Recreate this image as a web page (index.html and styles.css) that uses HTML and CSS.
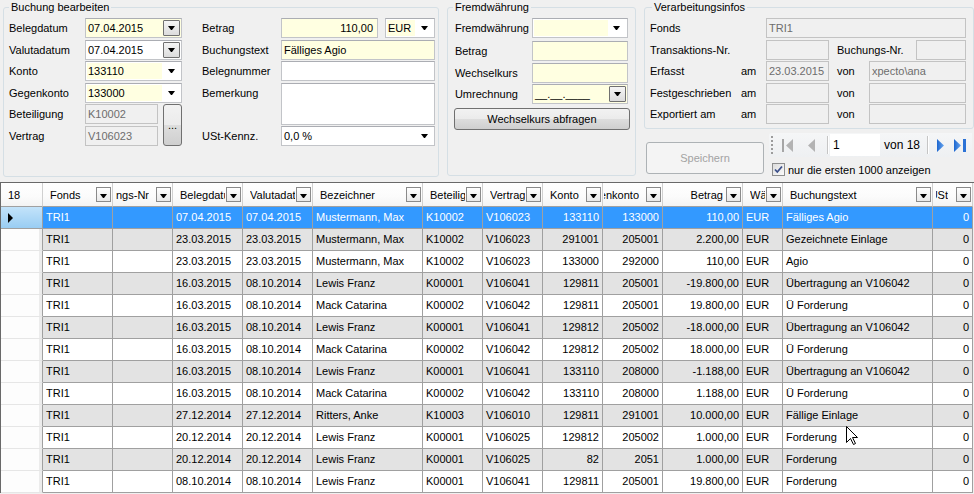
FILE: index.html
```html
<!DOCTYPE html>
<html lang="de">
<head>
<meta charset="utf-8">
<title>Buchung bearbeiten</title>
<link rel="stylesheet" href="styles.css">
</head>
<body>
<div class="top">
  <div class="group g1">
    <div class="gtitle">Buchung bearbeiten</div>
    <div class="cols">
      <div class="fgrid1">
        <div class="lbl">Belegdatum</div>
        <div class="tb yl date span3"><span>07.04.2015</span><span class="ddb"><i class="tri"></i></span></div>
        <div class="lbl">Valutadatum</div>
        <div class="tb date span3"><span>07.04.2015</span><span class="ddb"><i class="tri"></i></span></div>
        <div class="lbl">Konto</div>
        <div class="tb combo span3"><span class="val yl">133110</span><span class="arr"><i class="tri"></i></span></div>
        <div class="lbl">Gegenkonto</div>
        <div class="tb combo span3"><span class="val yl">133000</span><span class="arr"><i class="tri"></i></span></div>
        <div class="lbl c1">Beteiligung</div>
        <div class="tb dis c2">K10002</div>
        <div class="btn dots">...</div>
        <div class="lbl c1">Vertrag</div>
        <div class="tb dis c2">V106023</div>
      </div>
      <div class="fgrid2">
        <div class="lbl">Betrag</div>
        <div class="betrag">
          <div class="tb yl num amt">110,00</div>
          <div class="tb combo curr"><span class="val yl">EUR</span><span class="arr"><i class="tri"></i></span></div>
        </div>
        <div class="lbl">Buchungstext</div>
        <div class="tb yl">Fälliges Agio</div>
        <div class="lbl">Belegnummer</div>
        <div class="tb"></div>
        <div class="lbl rspan">Bemerkung</div>
        <div class="tb memo rspan"></div>
        <div class="lbl">USt-Kennz.</div>
        <div class="tb combo"><span class="val">0,0 %</span><span class="arr"><i class="tri"></i></span></div>
      </div>
    </div>
  </div>

  <div class="group g2">
    <div class="gtitle">Fremdwährung</div>
    <div class="fgrid3">
      <div class="lbl">Fremdwährung</div>
      <div class="tb combo"><span class="val yl"></span><span class="arr"><i class="tri"></i></span></div>
      <div class="lbl">Betrag</div>
      <div class="tb yl"></div>
      <div class="lbl">Wechselkurs</div>
      <div class="tb yl"></div>
      <div class="lbl">Umrechnung</div>
      <div class="tb yl date"><span>__.__.____</span><span class="ddb"><i class="tri"></i></span></div>
      <div class="btn fx">Wechselkurs abfragen</div>
    </div>
  </div>

  <div class="right">
    <div class="group g3">
      <div class="gtitle t3">Verarbeitungsinfos</div>
      <div class="fgrid4">
        <div class="lbl span2">Fonds</div>
        <div class="tb dis span4">TRI1</div>
        <div class="lbl span2">Transaktions-Nr.</div>
        <div class="tb dis"></div>
        <div></div>
        <div class="pair span2"><span class="lbl">Buchungs-Nr.</span><span class="tb dis bnr"></span></div>
        <div class="lbl">Erfasst</div>
        <div class="lbl">am</div>
        <div class="tb dis">23.03.2015</div>
        <div></div>
        <div class="lbl">von</div>
        <div class="tb dis">xpecto\ana</div>
        <div class="lbl">Festgeschrieben</div>
        <div class="lbl">am</div>
        <div class="tb dis"></div>
        <div></div>
        <div class="lbl">von</div>
        <div class="tb dis"></div>
        <div class="lbl">Exportiert am</div>
        <div class="lbl">am</div>
        <div class="tb dis"></div>
        <div></div>
        <div class="lbl">von</div>
        <div class="tb dis"></div>
      </div>
    </div>
    <div class="actions">
      <div class="save">Speichern</div>
      <div class="pager">
        <div class="toolbar">
          <span class="grip"></span>
          <svg class="i-first" width="12" height="13" viewBox="0 0 12 13"><rect x="0" y="0" width="2" height="13" fill="#a6a6a6"/><path d="M11 0 L4 6.5 L11 13 Z" fill="#b3b3b3"/></svg>
          <svg class="i-prev" width="7" height="13" viewBox="0 0 7 13"><path d="M7 0 L0 6.5 L7 13 Z" fill="#b3b3b3"/></svg>
          <span class="sep"></span>
          <span class="pos">1</span>
          <span class="von">von 18</span>
          <span class="sep s2"></span>
          <svg class="i-next" width="7" height="13" viewBox="0 0 7 13"><defs><linearGradient id="bl" x1="0" y1="0" x2="1" y2="0"><stop offset="0" stop-color="#1c66cf"/><stop offset="1" stop-color="#6aa6ee"/></linearGradient></defs><path d="M0 0 L7 6.5 L0 13 Z" fill="url(#bl)"/></svg>
          <svg class="i-last" width="12" height="13" viewBox="0 0 12 13"><path d="M0 0 L7 6.5 L0 13 Z" fill="url(#bl)"/><rect x="9" y="0" width="3" height="13" fill="#2b72d6"/></svg>
        </div>
        <div class="cbrow">
          <span class="cb"><svg width="11" height="11" viewBox="0 0 11 11"><path d="M2 5.5 L4.3 8 L9 2.5" fill="none" stroke="#3b4f8a" stroke-width="1.8"/></svg></span>
          <span class="cbt">nur die ersten 1000 anzeigen</span>
        </div>
      </div>
    </div>
  </div>
</div>

<div class="grid">
  <table>
    <colgroup>
      <col class="w42"><col class="w70"><col class="w60"><col class="w70"><col class="w70"><col class="w110"><col class="w60"><col class="w60"><col class="w60"><col class="w60"><col class="w80"><col class="w40"><col class="w150"><col class="w40">
    </colgroup>
    <thead>
      <tr>
        <th class="rh"><div class="h">18</div></th>
        <th><div class="h"><span class="ht">Fonds</span><span class="fb"><i class="tri"></i></span></div></th>
        <th><div class="h cl"><span class="ht clip"><span>Buchungs-Nr</span></span><span class="fb"><i class="tri"></i></span></div></th>
        <th><div class="h"><span class="ht">Belegdatum</span><span class="fb"><i class="tri"></i></span></div></th>
        <th><div class="h"><span class="ht">Valutadatum</span><span class="fb"><i class="tri"></i></span></div></th>
        <th><div class="h"><span class="ht">Bezeichner</span><span class="fb"><i class="tri"></i></span></div></th>
        <th><div class="h"><span class="ht">Beteiligung</span><span class="fb"><i class="tri"></i></span></div></th>
        <th><div class="h"><span class="ht">Vertrag</span><span class="fb"><i class="tri"></i></span></div></th>
        <th><div class="h"><span class="ht">Konto</span><span class="fb"><i class="tri"></i></span></div></th>
        <th><div class="h cl c0"><span class="ht clip"><span>Gegenkonto</span></span><span class="fb"><i class="tri"></i></span></div></th>
        <th><div class="h"><span class="ht rt">Betrag</span><span class="fb"><i class="tri"></i></span></div></th>
        <th><div class="h"><span class="ht">Währung</span><span class="fb"><i class="tri"></i></span></div></th>
        <th><div class="h"><span class="ht">Buchungstext</span><span class="fb"><i class="tri"></i></span></div></th>
        <th><div class="h cl"><span class="ht clip cu"><span>USt</span></span><span class="fb"><i class="tri"></i></span></div></th>
      </tr>
    </thead>
    <tbody>
      <tr class="sel"><td class="rh"><i class="rowcur"></i></td><td>TRI1</td><td></td><td>07.04.2015</td><td>07.04.2015</td><td>Mustermann, Max</td><td>K10002</td><td>V106023</td><td class="r">133110</td><td class="r">133000</td><td class="r">110,00</td><td>EUR</td><td>Fälliges Agio</td><td class="r">0</td></tr>
      <tr class="alt"><td class="rh"></td><td>TRI1</td><td></td><td>23.03.2015</td><td>23.03.2015</td><td>Mustermann, Max</td><td>K10002</td><td>V106023</td><td class="r">291001</td><td class="r">205001</td><td class="r">2.200,00</td><td>EUR</td><td>Gezeichnete Einlage</td><td class="r">0</td></tr>
      <tr><td class="rh"></td><td>TRI1</td><td></td><td>23.03.2015</td><td>23.03.2015</td><td>Mustermann, Max</td><td>K10002</td><td>V106023</td><td class="r">133000</td><td class="r">292000</td><td class="r">110,00</td><td>EUR</td><td>Agio</td><td class="r">0</td></tr>
      <tr class="alt"><td class="rh"></td><td>TRI1</td><td></td><td>16.03.2015</td><td>08.10.2014</td><td>Lewis Franz</td><td>K00001</td><td>V106041</td><td class="r">129811</td><td class="r">205001</td><td class="r">-19.800,00</td><td>EUR</td><td>Übertragung an V106042</td><td class="r">0</td></tr>
      <tr><td class="rh"></td><td>TRI1</td><td></td><td>16.03.2015</td><td>08.10.2014</td><td>Mack Catarina</td><td>K00002</td><td>V106042</td><td class="r">129811</td><td class="r">205001</td><td class="r">19.800,00</td><td>EUR</td><td>Ü Forderung</td><td class="r">0</td></tr>
      <tr class="alt"><td class="rh"></td><td>TRI1</td><td></td><td>16.03.2015</td><td>08.10.2014</td><td>Lewis Franz</td><td>K00001</td><td>V106041</td><td class="r">129812</td><td class="r">205002</td><td class="r">-18.000,00</td><td>EUR</td><td>Übertragung an V106042</td><td class="r">0</td></tr>
      <tr><td class="rh"></td><td>TRI1</td><td></td><td>16.03.2015</td><td>08.10.2014</td><td>Mack Catarina</td><td>K00002</td><td>V106042</td><td class="r">129812</td><td class="r">205002</td><td class="r">18.000,00</td><td>EUR</td><td>Ü Forderung</td><td class="r">0</td></tr>
      <tr class="alt"><td class="rh"></td><td>TRI1</td><td></td><td>16.03.2015</td><td>08.10.2014</td><td>Lewis Franz</td><td>K00001</td><td>V106041</td><td class="r">133110</td><td class="r">208000</td><td class="r">-1.188,00</td><td>EUR</td><td>Übertragung an V106042</td><td class="r">0</td></tr>
      <tr><td class="rh"></td><td>TRI1</td><td></td><td>16.03.2015</td><td>08.10.2014</td><td>Mack Catarina</td><td>K00002</td><td>V106042</td><td class="r">133110</td><td class="r">208000</td><td class="r">1.188,00</td><td>EUR</td><td>Ü Forderung</td><td class="r">0</td></tr>
      <tr class="alt"><td class="rh"></td><td>TRI1</td><td></td><td>27.12.2014</td><td>27.12.2014</td><td>Ritters, Anke</td><td>K10003</td><td>V106010</td><td class="r">129811</td><td class="r">291001</td><td class="r">10.000,00</td><td>EUR</td><td>Fällige Einlage</td><td class="r">0</td></tr>
      <tr><td class="rh"></td><td>TRI1</td><td></td><td>20.12.2014</td><td>20.12.2014</td><td>Lewis Franz</td><td>K00001</td><td>V106025</td><td class="r">129812</td><td class="r">205002</td><td class="r">1.000,00</td><td>EUR</td><td>Forderung</td><td class="r">0</td></tr>
      <tr class="alt"><td class="rh"></td><td>TRI1</td><td></td><td>20.12.2014</td><td>20.12.2014</td><td>Lewis Franz</td><td>K00001</td><td>V106025</td><td class="r">82</td><td class="r">2051</td><td class="r">1.000,00</td><td>EUR</td><td>Forderung</td><td class="r">0</td></tr>
      <tr><td class="rh"></td><td>TRI1</td><td></td><td>08.10.2014</td><td>08.10.2014</td><td>Lewis Franz</td><td>K00001</td><td>V106041</td><td class="r">129811</td><td class="r">205001</td><td class="r">19.800,00</td><td>EUR</td><td>Forderung</td><td class="r">0</td></tr>
    </tbody>
  </table>
</div>

<svg class="mouse" width="13" height="20" viewBox="0 0 13 20"><path d="M0.5 0.5 L0.5 16.5 L4.5 12.5 L7.5 18.5 L9.5 17.5 L6.5 11.5 L11.5 11.5 Z" fill="#fff" stroke="#000" stroke-width="1"/></svg>
</body>
</html>
```

FILE: styles.css
```css
html, body {
  margin: 0;
  padding: 0;
}
body {
  position: relative;
  width: 974px;
  height: 494px;
  overflow: hidden;
  background: #f0f0f0;
  color: #000;
  font-family: "Liberation Sans", Arial, sans-serif;
  font-size: 11px;
}

/* ---------- top area ---------- */
.top {
  display: flex;
  align-items: flex-start;
  height: 182px;
  padding-left: 3px;
  box-sizing: border-box;
}
.group {
  box-sizing: border-box;
  border: 1px solid #d5dfe5;
  border-radius: 3px;
  margin-top: 7px;
}
.gtitle {
  width: max-content;
  height: 14px;
  line-height: 14px;
  margin: -8px 0 -6px 5px;
  padding: 0 2px;
  background: #f0f0f0;
  position: relative;
}
.gtitle.t3 { margin-left: 7px; }

.g1 { width: 438px; height: 170px; }
.g2 { width: 190px; height: 169px; margin-left: 8px; }
.right { margin-left: 8px; width: 330px; }
.g3 { width: 330px; height: 122px; }

.cols {
  display: flex;
  gap: 20px;
  padding: 10px 0 0 5px;
}
.fgrid1 {
  display: grid;
  grid-template-columns: 76px 73px 5px 19px;
  grid-template-rows: 22px 21px 22px 21px 22px 20px;
}
.fgrid2 {
  display: grid;
  grid-template-columns: 79px 154px;
  grid-template-rows: 22px 21px 22px 21px 22px 20px;
}
.fgrid3 {
  display: grid;
  grid-template-columns: 77px 96px;
  grid-template-rows: 23px 22px 21px 20px auto;
  padding: 10px 0 0 7px;
}
.fgrid4 {
  display: grid;
  grid-template-columns: 91px 25px 63px 8px 32px 97px;
  grid-template-rows: 22px 21px 22px 21px 20px;
  padding: 10px 0 0 5px;
}
.span2 { grid-column: span 2; }
.span3 { grid-column: span 3; }
.span4 { grid-column: span 4; }
.rspan { grid-row: span 2; }
.c1 { grid-column: 1; }
.c2 { grid-column: 2; }

.lbl {
  height: 20px;
  line-height: 20px;
  white-space: nowrap;
}

.tb {
  box-sizing: border-box;
  height: 20px;
  border: 1px solid #c2c4c8;
  border-top-color: #abadb3;
  background: #fff;
  padding: 0 2px;
  line-height: 18px;
  white-space: nowrap;
  overflow: hidden;
}
.yl { background: #ffffe1; }
.tb.dis {
  background: #f0f0f0;
  color: #6d6d6d;
  border-color: #c3c3c3;
}
.tb.memo { height: 42px; }
.tb.num { text-align: right; padding-right: 4px; }

.tb.date {
  display: flex;
  align-items: center;
  justify-content: space-between;
  padding-right: 1px;
}
.ddb {
  box-sizing: border-box;
  width: 17px;
  height: 16px;
  border: 1px solid #707070;
  border-radius: 1px;
  background: linear-gradient(#f5f5f5, #dcdcdc);
  display: flex;
  align-items: center;
  justify-content: center;
}
.tri {
  display: block;
  width: 1px;
  height: 0;
  border-left: 3px solid transparent;
  border-right: 3px solid transparent;
  border-top: 4px solid #000;
}

.tb.combo {
  display: flex;
  padding: 1px;
}
.combo .val {
  flex: 1;
  min-width: 0;
  padding-left: 1px;
  line-height: 16px;
}
.combo .arr {
  width: 18px;
  flex-shrink: 0;
  display: flex;
  align-items: center;
  justify-content: center;
}

.betrag {
  display: flex;
  gap: 7px;
}
.betrag .amt { width: 97px; flex-shrink: 0; }
.betrag .curr { width: 50px; flex-shrink: 0; }

.btn {
  box-sizing: border-box;
  border: 1px solid #707070;
  border-radius: 3px;
  background: linear-gradient(#f2f2f2 0%, #ebebeb 50%, #dddddd 51%, #cfcfcf 100%);
  display: flex;
  align-items: center;
  justify-content: center;
}
.dots {
  grid-column: 4;
  grid-row: 5 / span 2;
  height: 42px;
  width: 19px;
  font-size: 11px;
  line-height: 1;
}
.fx {
  grid-column: span 2;
  width: 176px;
  height: 22px;
  margin: 4px 0 0 -1px;
}

.pair {
  display: flex;
  justify-content: space-between;
}
.pair .bnr { width: 50px; }

/* ---------- actions / pager ---------- */
.actions {
  display: flex;
  align-items: flex-start;
}
.save {
  box-sizing: border-box;
  margin: 13px 0 0 2px;
  width: 118px;
  height: 32px;
  border: 1px solid #adb2b5;
  border-radius: 3px;
  background: #f4f4f4;
  color: #a3a3a3;
  display: flex;
  align-items: center;
  justify-content: center;
}
.pager { margin: 4px 0 0 5px; }
.toolbar {
  display: flex;
  align-items: center;
  height: 24px;
  width: 203px;
  background: linear-gradient(#f5f6f7, #eef0f2);
  border-radius: 3px 0 0 3px;
}
.grip {
  width: 2px;
  height: 18px;
  margin-left: 2px;
  background: linear-gradient(#9c9c9c 50%, transparent 50%) 0 0 / 2px 4px repeat-y;
}
.i-first { margin-left: 9px; }
.i-prev { margin-left: 14px; }
.sep {
  width: 1px;
  height: 18px;
  background: #c5c5c5;
  border-right: 1px solid #fff;
  margin-left: 12px;
}
.sep.s2 { margin-left: 7px; }
.pos {
  box-sizing: border-box;
  width: 50px;
  height: 22px;
  line-height: 22px;
  background: #fff;
  margin-left: 1px;
  padding-left: 3px;
  font-size: 12px;
}
.von { margin-left: 4px; font-size: 12px; }
.i-next { margin-left: 8px; }
.i-last { margin-left: 10px; }

.cbrow {
  display: flex;
  align-items: center;
  margin-top: 6px;
  height: 13px;
}
.cb {
  box-sizing: border-box;
  width: 13px;
  height: 13px;
  margin-left: 3px;
  border: 1px solid #8e8f8f;
  background: linear-gradient(135deg, #dcdcdc, #fbfbfb);
  display: flex;
  align-items: center;
  justify-content: center;
}
.cbt { margin-left: 3px; }

/* ---------- data grid ---------- */
.grid {
  border-top: 1px solid #696969;
  border-left: 1px solid #696969;
  width: 973px;
}
table {
  border-collapse: separate;
  border-spacing: 0;
  table-layout: fixed;
  width: 972px;
}
.w40 { width: 40px; }
.w42 { width: 42px; }
.w60 { width: 60px; }
.w70 { width: 70px; }
.w80 { width: 80px; }
.w110 { width: 110px; }
.w150 { width: 150px; }

th {
  padding: 0;
  font-weight: normal;
  text-align: left;
  background: linear-gradient(#ffffff, #fbfbfb 60%, #f3f3f3);
  border-right: 1px solid #d0d0d0;
  border-bottom: 1px solid #a0a0a0;
}
.h {
  display: flex;
  align-items: center;
  height: 23px;
  padding-left: 7px;
  overflow: hidden;
}
.h.cl { padding-left: 3px; }
.h.c0 { padding-left: 1px; }
.ht {
  flex: 1;
  min-width: 0;
  overflow: hidden;
  white-space: nowrap;
}
.ht.rt { text-align: right; padding-right: 2px; }
.ht.clip {
  display: flex;
  justify-content: flex-end;
  margin-right: 6px;
}
.ht.clip.cu { margin-right: 7px; max-width: 12px; margin-left: auto; }
.ht.clip span { flex-shrink: 0; }
.fb {
  box-sizing: border-box;
  flex-shrink: 0;
  width: 15px;
  height: 15px;
  margin: 0 1px 0 1px;
  border: 1px solid #8a8a8a;
  background: linear-gradient(#ffffff, #e9e9e9);
  display: flex;
  align-items: center;
  justify-content: center;
  padding-top: 3px;
}

td {
  height: 21px;
  padding: 0 3px;
  line-height: 21px;
  white-space: nowrap;
  overflow: hidden;
  background: #fff;
  border-right: 1px solid #a0a0a0;
  border-bottom: 1px solid #a0a0a0;
}
td.r { text-align: right; padding-right: 3px; }
tr.alt td { background: #e3e3e3; }
tr.sel td { background: #3399ff; color: #fff; }

td.rh, tr.alt td.rh {
  background: #fdfdfd;
  border-bottom-color: #e6e6e6;
  box-shadow: inset -3px 0 0 #ececec;
  padding: 0 0 0 7px;
}
tr.sel td.rh {
  background: linear-gradient(#c3e3fa, #99cdf3);
  box-shadow: none;
  border-bottom-color: #a0a0a0;
}
.rowcur {
  display: block;
  width: 0;
  height: 0;
  border-top: 5px solid transparent;
  border-bottom: 5px solid transparent;
  border-left: 5px solid #000;
}

.mouse {
  position: absolute;
  left: 846px;
  top: 426px;
}
```
